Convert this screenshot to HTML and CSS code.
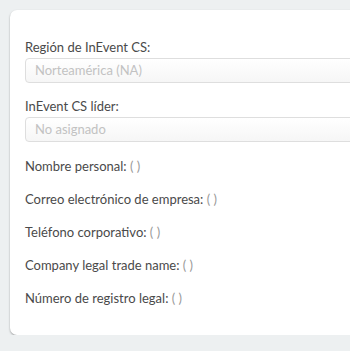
FILE: index.html
```html
<!DOCTYPE html>
<html lang="es">
<head>
    <meta charset="UTF-8">
    <meta name="viewport" content="width=device-width, initial-scale=1.0">
    <title>Datos de empresa</title>
    <link rel="stylesheet" href="styles.css">
</head>
<body>
    <div class="card">
        <div class="field">
            <label class="field-label">Región de InEvent CS:</label>
            <div class="field-input">Norteamérica (NA)</div>
        </div>

        <div class="field">
            <label class="field-label">InEvent CS líder:</label>
            <div class="field-input">No asignado</div>
        </div>

        <ul class="info">
            <li>Nombre personal: <span class="empty">( )</span></li>
            <li>Correo electrónico de empresa: <span class="empty">( )</span></li>
            <li>Teléfono corporativo: <span class="empty">( )</span></li>
            <li>Company legal trade name: <span class="empty">( )</span></li>
            <li>Número de registro legal: <span class="empty">( )</span></li>
        </ul>
    </div>
</body>
</html>
```

FILE: styles.css
```css
body {
    font-family: Lato, "Open Sans", sans-serif;
    font-size: 13px;
    color: #4a4a4a;
    margin: 0;
    padding: 10px 0 0 10px;
    background-color: #edf0f1;
    overflow: hidden;
}

.card {
    width: 400px;
    background: #fff;
    border-radius: 7px;
    box-shadow: 0 1px 2px rgba(0, 0, 0, 0.35);
    padding: 28px 15px 28px 15px;
}

.field {
    margin-bottom: 14px;
}

.field-label {
    display: block;
    line-height: 18px;
    margin-bottom: 2px;
}

.field-input {
    height: 23px;
    line-height: 23px;
    border: 1px solid #dedede;
    border-radius: 4px;
    background: linear-gradient(#fff, #f6f6f6);
    padding: 0 9px;
    color: #c2c2c2;
}

/* Read-only info rows */
.info {
    list-style: none;
    margin: 15px 0 0 0;
    padding: 0;
}

.info li {
    line-height: 18px;
    margin-bottom: 15px;
}

.info li:last-child {
    margin-bottom: 0;
}

.empty {
    color: #9a9a9a;
}
```
